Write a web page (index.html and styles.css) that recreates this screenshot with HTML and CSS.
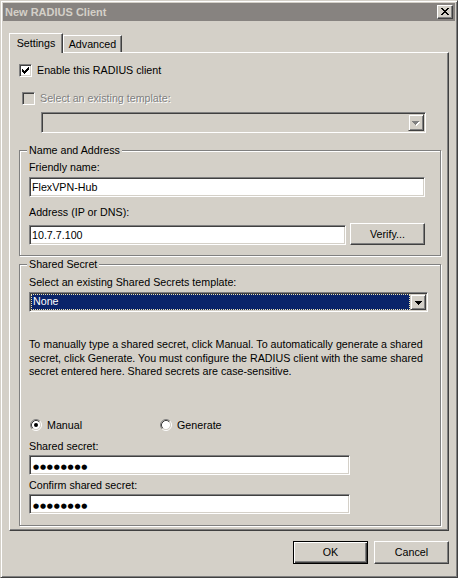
FILE: index.html
```html
<!DOCTYPE html>
<html lang="en">
<head>
<meta charset="utf-8">
<title>New RADIUS Client</title>
<link rel="stylesheet" href="styles.css">
</head>
<body>
<div class="window">
  <div class="titlebar">
    <span class="title">New RADIUS Client</span>
    <span class="close-btn">
      <svg width="8" height="7" viewBox="0 0 8 7" shape-rendering="crispEdges"><path d="M0 0h2v1H0zM6 0h2v1H6zM1 1h2v1H1zM5 1h2v1H5zM2 2h4v1H2zM3 3h2v1H3zM2 4h4v1H2zM1 5h2v1H1zM5 5h2v1H5zM0 6h2v1H0zM6 6h2v1H6z" fill="#000"/></svg>
    </span>
  </div>

  <div class="tabs">
    <div class="tab tab-active">Settings</div>
    <div class="tab tab-adv">Advanced</div>
  </div>

  <div class="panel">
    <div class="check-row row-enable">
      <span class="checkbox">
        <svg width="7" height="7" viewBox="0 0 7 7" shape-rendering="crispEdges"><path d="M6 0h1v1H6zM5 1h2v1H5zM0 2h1v1H0zM4 2h3v1H4zM0 3h2v1H0zM3 3h3v1H3zM0 4h5v1H0zM1 5h3v1H1zM2 6h1v1H2z" fill="#000"/></svg>
      </span>
      <span>Enable this RADIUS client</span>
    </div>

    <div class="check-row row-template">
      <span class="checkbox checkbox-disabled"></span>
      <span class="disabled-text">Select an existing template:</span>
    </div>

    <div class="combo combo-template">
      <span class="combo-field"></span>
      <span class="combo-btn">
        <svg width="8" height="5" viewBox="0 0 8 5" shape-rendering="crispEdges"><path d="M1 1h7v1H1zM2 2h5v1H2zM3 3h3v1H3zM4 4h1v1H4z" fill="#fff"/><path d="M0 0h7v1H0zM1 1h5v1H1zM2 2h3v1H2zM3 3h1v1H3z" fill="#808080"/></svg>
      </span>
    </div>

    <fieldset class="group group-name">
      <legend>Name and Address</legend>
      <div class="label label-first">Friendly name:</div>
      <div class="textbox tb-friendly">FlexVPN-Hub</div>
      <div class="label label-addr">Address (IP or DNS):</div>
      <div class="addr-row">
        <div class="textbox tb-addr">10.7.7.100</div>
        <div class="button btn-verify">Verify...</div>
      </div>
    </fieldset>

    <fieldset class="group group-secret">
      <legend>Shared Secret</legend>
      <div class="label label-first2">Select an existing Shared Secrets template:</div>
      <div class="combo combo-secret">
        <span class="combo-field combo-selected">None</span>
        <span class="combo-btn">
          <svg width="7" height="4" viewBox="0 0 7 4" shape-rendering="crispEdges"><path d="M0 0h7v1H0zM1 1h5v1H1zM2 2h3v1H2zM3 3h1v1H3z" fill="#000"/></svg>
        </span>
      </div>
      <p class="help">To manually type a shared secret, click Manual. To automatically generate a shared<br>secret, click Generate. You must configure the RADIUS client with the same shared<br>secret entered here. Shared secrets are case-sensitive.</p>
      <div class="radio-row">
        <div class="radio-item radio-manual">
          <svg class="radio" width="12" height="12" viewBox="0 0 12 12">
            <circle cx="6" cy="6" r="4.2" fill="#fff"/>
            <path d="M2.11 9.89A5.5 5.5 0 0 1 9.89 2.11" fill="none" stroke="#808080"/>
            <path d="M9.89 2.11A5.5 5.5 0 0 1 2.11 9.89" fill="none" stroke="#fff"/>
            <path d="M2.82 9.18A4.5 4.5 0 0 1 9.18 2.82" fill="none" stroke="#404040"/>
            <path d="M9.18 2.82A4.5 4.5 0 0 1 2.82 9.18" fill="none" stroke="#d4d0c8"/>
            <circle cx="6" cy="6" r="2" fill="#000"/>
          </svg>
          <span>Manual</span>
        </div>
        <div class="radio-item">
          <svg class="radio" width="12" height="12" viewBox="0 0 12 12">
            <circle cx="6" cy="6" r="4.2" fill="#fff"/>
            <path d="M2.11 9.89A5.5 5.5 0 0 1 9.89 2.11" fill="none" stroke="#808080"/>
            <path d="M9.89 2.11A5.5 5.5 0 0 1 2.11 9.89" fill="none" stroke="#fff"/>
            <path d="M2.82 9.18A4.5 4.5 0 0 1 9.18 2.82" fill="none" stroke="#404040"/>
            <path d="M9.18 2.82A4.5 4.5 0 0 1 2.82 9.18" fill="none" stroke="#d4d0c8"/>
          </svg>
          <span>Generate</span>
        </div>
      </div>
      <div class="label label-secret">Shared secret:</div>
      <div class="textbox tb-secret"><span class="dots">●●●●●●●●</span></div>
      <div class="label label-confirm">Confirm shared secret:</div>
      <div class="textbox tb-secret"><span class="dots">●●●●●●●●</span></div>
    </fieldset>
  </div>

  <div class="footer">
    <div class="button btn-default">OK</div>
    <div class="button">Cancel</div>
  </div>
</div>
</body>
</html>
```

FILE: styles.css
```css
* { box-sizing: border-box; }

html, body {
  margin: 0;
  padding: 0;
  background: #d4d0c8;
}

body {
  font-family: "Liberation Sans", Arial, sans-serif;
  font-size: 10.7px;
  color: #000;
}

.window {
  width: 458px;
  height: 578px;
  background: #d4d0c8;
  border: 1px solid;
  border-color: #d4d0c8 #404040 #404040 #d4d0c8;
  box-shadow: inset 1px 1px 0 #fff, inset -1px -1px 0 #808080;
  padding: 2px;
  display: flex;
  flex-direction: column;
}

/* Title bar */
.titlebar {
  height: 18px;
  background: #878380;
  display: flex;
  align-items: center;
  justify-content: space-between;
  padding: 0 2px 0 2px;
}

.title {
  color: #d4d0c8;
  font-weight: bold;
  font-size: 11px;
  line-height: 13px;
}

.close-btn {
  width: 16px;
  height: 14px;
  background: #d4d0c8;
  border: 1px solid;
  border-color: #fff #404040 #404040 #fff;
  box-shadow: inset -1px -1px 0 #808080;
  display: flex;
  align-items: center;
  justify-content: center;
  padding-bottom: 1px;
}

.close-btn svg { display: block; }

/* Tabs */
.tabs {
  margin-top: 12px;
  margin-left: 6px;
  height: 19px;
  display: flex;
  align-items: flex-end;
}

.tab {
  height: 17px;
  background: #d4d0c8;
  border-top: 1px solid #fff;
  border-left: 1px solid #fff;
  border-right: 1px solid #404040;
  box-shadow: inset -1px 0 0 #808080;
  text-align: center;
  line-height: 13px;
  padding-top: 2px;
}

.tab-active {
  width: 54px;
  height: 20px;
  margin-bottom: -1px;
  padding-top: 3px;
  position: relative;
  z-index: 1;
}

.tab-adv {
  width: 59px;
}

/* Panel */
.panel {
  margin-left: 6px;
  width: 440px;
  height: 479px;
  border-top: 1px solid #fff;
  border-left: 1px solid #fff;
  border-right: 1px solid #404040;
  border-bottom: 1px solid #404040;
  box-shadow: inset -1px -1px 0 #808080;
  display: flex;
  flex-direction: column;
  align-items: flex-start;
}

.check-row {
  display: flex;
  align-items: center;
  height: 13px;
  gap: 5px;
  line-height: 13px;
}

.row-enable {
  margin-top: 11px;
  margin-left: 9px;
}

.row-template {
  margin-top: 15px;
  margin-left: 12px;
}

.checkbox {
  width: 13px;
  height: 13px;
  flex: none;
  background: #fff;
  border: 1px solid;
  border-color: #808080 #fff #fff #808080;
  box-shadow: inset 1px 1px 0 #404040, inset -1px -1px 0 #d4d0c8;
  display: flex;
  align-items: center;
  justify-content: center;
}

.checkbox svg { display: block; }

.checkbox-disabled {
  background: #d4d0c8;
}

.disabled-text {
  color: #808080;
  text-shadow: 1px 1px 0 #fff;
}

/* Combo boxes */
.combo {
  display: flex;
  border: 1px solid;
  border-color: #808080 #fff #fff #808080;
  box-shadow: inset 1px 1px 0 #404040, inset -1px -1px 0 #d4d0c8;
  padding: 1px;
}

.combo-template {
  margin-top: 7px;
  margin-left: 31px;
  width: 385px;
  height: 21px;
  background: #d4d0c8;
}

.combo-field {
  flex: 1;
  line-height: 14px;
}

.combo-btn {
  width: 16px;
  flex: none;
  background: #d4d0c8;
  border: 1px solid;
  border-color: #d4d0c8 #404040 #404040 #d4d0c8;
  box-shadow: inset 1px 1px 0 #fff, inset -1px -1px 0 #808080;
  display: flex;
  align-items: center;
  justify-content: center;
  padding-top: 1px;
}

.combo-btn svg { display: block; }

.combo-secret {
  margin-top: 3px;
  margin-left: 9px;
  width: 399px;
  height: 20px;
  background: #fff;
}

.combo-selected {
  background: #0a246a;
  color: #fff;
  outline: 1px dotted #efe4b0;
  outline-offset: -1px;
  padding-left: 2px;
}

/* Group boxes */
.group {
  margin: 0;
  margin-left: 9px;
  width: 422px;
  min-width: 0;
  padding: 0 0 10px 0;
  border: 1px solid #808080;
  box-shadow: inset 1px 1px 0 #fff, 1px 1px 0 #fff;
  display: flex;
  flex-direction: column;
  align-items: flex-start;
}

.group legend {
  margin-left: 7px;
  padding: 0 2px;
  line-height: 13px;
  background: #d4d0c8;
}

.group-name {
  margin-top: 11px;
}

.group-secret {
  margin-top: 2px;
  padding-bottom: 11px;
}

.label {
  margin-left: 9px;
  line-height: 13px;
}

.label-first { margin-top: 4px; }
.label-addr { margin-top: 9px; }
.label-first2 { margin-top: 5px; }
.label-secret { margin-top: 8px; }
.label-confirm { margin-top: 4px; }

.textbox {
  height: 20px;
  background: #fff;
  border: 1px solid;
  border-color: #808080 #fff #fff #808080;
  box-shadow: inset 1px 1px 0 #404040, inset -1px -1px 0 #d4d0c8;
  padding: 1px 1px 1px 2px;
  line-height: 16px;
  white-space: nowrap;
}

.tb-friendly {
  margin-top: 3px;
  margin-left: 9px;
  width: 396px;
}

.addr-row {
  margin-top: 4px;
  margin-left: 9px;
  display: flex;
  align-items: flex-end;
  gap: 4px;
}

.tb-addr {
  width: 317px;
}

.tb-secret {
  margin-top: 2px;
  margin-left: 9px;
  width: 321px;
}

.dots {
  font-family: "DejaVu Sans", sans-serif;
  font-size: 7px;
  letter-spacing: 0.8px;
  line-height: 16px;
  padding-left: 1px;
}

/* Buttons */
.button {
  width: 75px;
  height: 23px;
  background: #d4d0c8;
  border: 1px solid;
  border-color: #fff #404040 #404040 #fff;
  box-shadow: inset -1px -1px 0 #808080;
  display: flex;
  align-items: center;
  justify-content: center;
  line-height: 13px;
}

.btn-verify {
  height: 22px;
}

.btn-default {
  border-color: #000;
  box-shadow: inset 1px 1px 0 #fff, inset -1px -1px 0 #404040, inset -2px -2px 0 #808080;
}

/* Help text */
.help {
  margin: 26px 0 0 9px;
  line-height: 13.5px;
  white-space: nowrap;
}

/* Radios */
.radio-row {
  margin-top: 40px;
  margin-left: 10px;
  height: 13px;
  display: flex;
  align-items: center;
}

.radio-item {
  display: flex;
  align-items: center;
  gap: 5px;
  line-height: 13px;
}

.radio-manual {
  width: 130px;
}

.radio { display: block; flex: none; }

/* Footer */
.footer {
  margin-top: 10px;
  margin-right: 6px;
  display: flex;
  justify-content: flex-end;
  gap: 6px;
}
```
